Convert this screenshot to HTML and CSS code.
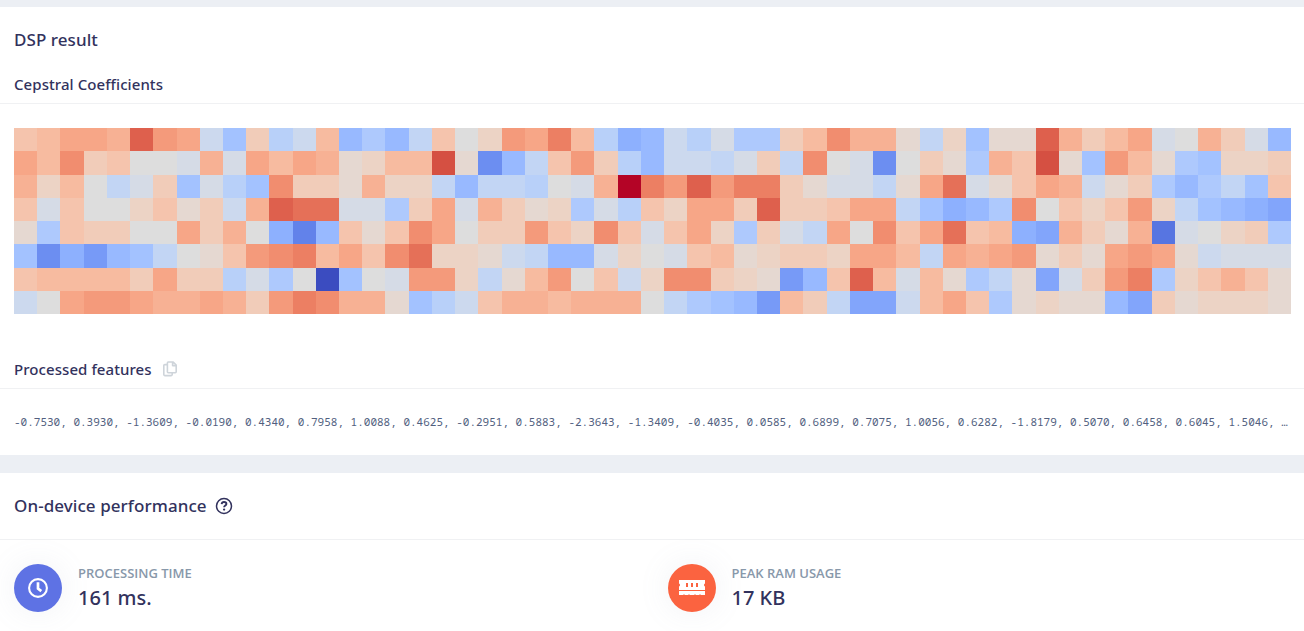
FILE: index.html
```html
<!DOCTYPE html>
<html lang="en">
<head>
<meta charset="utf-8">
<title>DSP result</title>
<link rel="stylesheet" href="styles.css">
</head>
<body>
<main class="page">
  <section class="card card-result">
    <h2 class="title">DSP result</h2>
    <h3 class="subtitle">Cepstral Coefficients</h3>
    <div class="heatmap" id="heatmap"></div>
    <h3 class="subtitle subtitle-features">Processed features
      <svg class="copy" width="14" height="16" viewBox="0 0 14 16" fill="none" stroke="#ced4da" stroke-width="1.6" stroke-linejoin="round"><path d="M5.2 1h5l3 3v6.8q0 .9-.9.9H5.2q-.8 0-.8-.9V1.9q0-.9.8-.9zM9.6 1v3.6h3.6M4 3.6H1.8q-1 0-1 1v9q0 1 1 1h6.4q1 0 1-1V12"/></svg>
    </h3>
    <div class="features">-0.7530, 0.3930, -1.3609, -0.0190, 0.4340, 0.7958, 1.0088, 0.4625, -0.2951, 0.5883, -2.3643, -1.3409, -0.4035, 0.0585, 0.6899, 0.7075, 1.0056, 0.6282, -1.8179, 0.5070, 0.6458, 0.6045, 1.5046, …</div>
  </section>
  <section class="card">
    <h2 class="title title-performance">On-device performance
      <svg class="help" width="18" height="18" viewBox="0 0 18 18" fill="none" stroke="#32325d"><circle cx="9" cy="9" r="7.5" stroke-width="1.5"/><path d="M6.6 7.1C6.8 5.7 7.7 5 9 5c1.4 0 2.4.8 2.4 1.900C11.4 8.500 9.100 8.500 9.100 10.300" stroke-width="1.900"/><circle cx="9.100" cy="12.600" r="1.150" fill="#32325d" stroke="none"/></svg>
    </h2>
    <div class="stats">
      <div class="stat">
        <div class="badge badge-time"><svg width="20" height="20" viewBox="0 0 20 20" fill="none" stroke="#fff"><circle cx="10" cy="10" r="8.900" stroke-width="2.100"/><path d="M10 4.300v6.200l3.300 2.600" stroke-width="2.700"/></svg></div>
        <div><div class="label">Processing time</div><div class="value">161 ms.</div></div>
      </div>
      <div class="stat">
        <div class="badge badge-ram"><svg width="26" height="16" viewBox="0 0 26 16"><path fill="#fff" fill-rule="evenodd" d="M0 0h26v3.500q-1 .3-1 1.500t1 1.500V10H0V6.500q1-.3 1-1.500T0 3.500zM7 3v4h2V3zM12 3v4h2V3zM17 3v4h2V3zM0 11h26v4h-4.500v-.7h-1v.7H16.500v-.7h-1v.7H10.500v-.7h-1v.7H5.500v-.7h-1v.7H0z"/></svg></div>
        <div><div class="label">Peak RAM usage</div><div class="value">17 KB</div></div>
      </div>
    </div>
  </section>
</main>
<script src="heatmap.js"></script>
</body>
</html>
```
FILE: styles.css
```css
* { box-sizing: border-box; }
body { margin: 0; background: #eceff4; font-family: "Open Sans", sans-serif; color: #32325d; }
.page { display: flex; flex-direction: column; gap: 18px; height: 631px; padding-top: 7px; overflow: hidden; }
.card { background: #fff; }
.card-result { height: 448px; flex: none; }
.card:last-child { flex: 1; }
.title { margin: 0; padding: 20px 14px 0; font-family: "Noto Sans", sans-serif; font-size: 17px; line-height: 26px; font-weight: 500; letter-spacing: .07px; }
.subtitle { display: flex; align-items: center; margin: 0; height: 39px; margin-top: 12px; padding: 0 14px; border-bottom: 1px solid #f0f1f3; font-family: "Noto Sans", sans-serif; font-size: 15px; line-height: 22px; font-weight: 500; letter-spacing: .07px; }
.heatmap { display: grid; grid-template-columns: repeat(55, 1fr); grid-template-rows: repeat(8, 1fr); width: 1277px; height: 186px; margin: 24px 0 0 14px; }
.subtitle-features { margin-top: 36px; }
.copy { margin-left: 11px; }
.features { padding: 25px 14px 0; font-family: "Noto Sans Mono", "DejaVu Sans Mono", monospace; font-size: 11px; line-height: 16px; white-space: nowrap; color: #525f7f; }
.title-performance { display: flex; align-items: center; height: 67px; padding: 0 14px; border-bottom: 1px solid #f0f1f3; }
.help { margin-left: 8px; }
.stats { display: grid; grid-template-columns: 1fr 1fr; padding: 24px 0 0 14px; column-gap: 17px; }
.stat { display: flex; gap: 16px; }
.badge { display: flex; align-items: center; justify-content: center; width: 48px; height: 48px; border-radius: 50%; box-shadow: 0 0 32px rgba(136, 152, 170, .12); }
.badge-time { background: #5e72e4; }
.badge-ram { background: #fb6340; }
.label { font-size: 13px; line-height: 19px; font-weight: 600; color: #8898aa; text-transform: uppercase; }
.value { padding-top: 1px; font-family: "Noto Sans", sans-serif; font-size: 20px; line-height: 28px; font-weight: 500; }
```
FILE: heatmap.js
```js
// Cool-to-warm colour scale, 33 steps; each cell is a base-36 digit.
const scale = ["59,76,192","68,90,204","77,104,215","87,117,225","98,130,234","108,142,241","119,154,247","130,165,251","141,176,254","152,185,255","163,194,255","174,201,253","184,208,249","194,213,244","204,217,238","213,219,230","221,221,221","229,216,209","236,211,197","241,204,185","245,196,173","247,187,160","247,177,148","247,166,135","244,154,123","241,141,111","236,127,99","229,112,88","222,96,77","213,80,66","203,62,56","192,40,47","180,4,38"];
const rows = [
  "klnnmsoneajce" + "l9b9dkgionqlc8" + "9ecfbbjlpmmhdi" + "ahhsmjlnfgmjf9",
  "nlpjkggfmfnln" + "mhillth59dkojc" + "9eedfjdpgf5gjh" + "bmkthaolhbaiij",
  "milgdfjafcapj" + "jhmiid9ddcgfmw" + "qosoqqjhffdhnr" + "fhknmehjb9bdak",
  "kfkggikhjemsr" + "rffbjnfmjhibfc" + "kinnjsjjknnda8" + "9bpgkikoida987",
  "hbkjjggnjmg84" + "9khkpngjjokipk" + "fknibjfdngpknr" + "kl87mjhm3fgijb",
  "a5869adghkopq" + "lnkpriihed99fi" + "gfklhijjinnldn" + "mnohjhnonhefff",
  "klllljnjjcfbg" + "0agfooidhlogke" + "ippjih69kslflh" + "bdh7fjoqbikmkh",
  "egnoonmmnmjoq" + "pmmhacekmmlmmm" + "gdba96ljd77eln" + "kbhihh97jhiiih"
];
const map = document.getElementById("heatmap");
for (const row of rows) {
  for (const digit of row) {
    const cell = document.createElement("div");
    cell.style.backgroundColor = "rgb(" + scale[parseInt(digit, 36)] + ")";
    map.appendChild(cell);
  }
}
```
